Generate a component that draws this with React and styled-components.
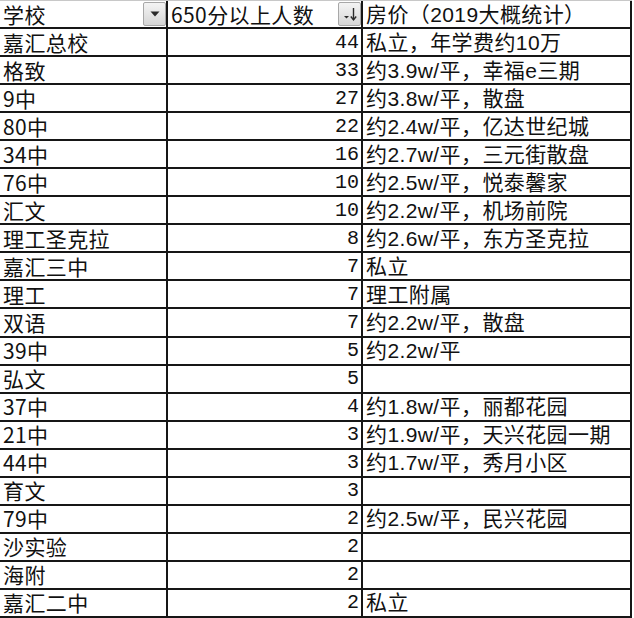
import React from 'react';
import styled, { createGlobalStyle } from 'styled-components';

const Global = createGlobalStyle`
  html, body {
    margin: 0;
    padding: 0;
    background: #ffffff;
  }
`;

const Sheet = styled.div`
  width: 632px;
  height: 618px;
  display: grid;
  grid-template-columns: 168px 195px 1fr;
  grid-template-rows: repeat(22, 1fr);
  border-top: 1px solid #c8c8c8;
  box-sizing: border-box;
  background: #fff;
`;

const Cell = styled.div`
  box-sizing: border-box;
  min-height: 0;
  display: flex;
  align-items: center;
  justify-content: ${p => (p.$right ? 'flex-end' : 'flex-start')};
  gap: 4px;
  padding: 0 ${p => (p.$right ? '2px' : '0')} 0 ${p => (p.$right ? '0' : '3px')};
  border-right: 2px solid #161616;
  border-bottom: 2px solid #161616;
  font-family: ${p =>
    p.$kind === 'num'
      ? '"Liberation Mono", "Noto Sans CJK SC", monospace'
      : p.$kind === 'note'
      ? '"Liberation Sans", "Noto Sans CJK SC", sans-serif'
      : '"Noto Sans CJK SC", sans-serif'};
  font-size: ${p => (p.$kind === 'num' ? '20px' : '21px')};
  letter-spacing: ${p => (p.$kind === 'num' ? '0' : '0.4px')};
  line-height: 25px;
  color: #111;
  white-space: nowrap;
`;

const Label = styled.span`
  flex: 1;
  min-width: 0;
`;

const FilterButton = styled.div`
  flex: none;
  width: 23px;
  height: 24px;
  box-sizing: border-box;
  border: 1px solid #a8a8a8;
  border-radius: 2px;
  background: linear-gradient(#f4f4f4, #d6d6d6);
  display: flex;
  align-items: center;
  justify-content: center;
`;

function DropIcon() {
  return (
    <svg width="10" height="6" viewBox="0 0 10 6">
      <path d="M0.5 0.5 L9.5 0.5 L5 5.5 Z" fill="#2a2a2a" />
    </svg>
  );
}

function SortIcon() {
  return (
    <svg width="16" height="16" viewBox="0 0 16 16">
      <path d="M2 10 L7 10 L4.5 12.5 Z" fill="#2a2a2a" />
      <path d="M11.5 2 L11.5 13.5" stroke="#2a2a2a" strokeWidth="1.4" />
      <path d="M8.8 10.5 L11.5 13.8 L14.2 10.5" stroke="#2a2a2a" strokeWidth="1.4" fill="none" />
    </svg>
  );
}

const rows = [
  ['嘉汇总校', 44, '私立，年学费约10万'],
  ['格致', 33, '约3.9w/平，幸福e三期'],
  ['9中', 27, '约3.8w/平，散盘'],
  ['80中', 22, '约2.4w/平，亿达世纪城'],
  ['34中', 16, '约2.7w/平，三元街散盘'],
  ['76中', 10, '约2.5w/平，悦泰馨家'],
  ['汇文', 10, '约2.2w/平，机场前院'],
  ['理工圣克拉', 8, '约2.6w/平，东方圣克拉'],
  ['嘉汇三中', 7, '私立'],
  ['理工', 7, '理工附属'],
  ['双语', 7, '约2.2w/平，散盘'],
  ['39中', 5, '约2.2w/平'],
  ['弘文', 5, ''],
  ['37中', 4, '约1.8w/平，丽都花园'],
  ['21中', 3, '约1.9w/平，天兴花园一期'],
  ['44中', 3, '约1.7w/平，秀月小区'],
  ['育文', 3, ''],
  ['79中', 2, '约2.5w/平，民兴花园'],
  ['沙实验', 2, ''],
  ['海附', 2, ''],
  ['嘉汇二中', 2, '私立'],
];

export default function App() {
  return (
    <>
      <Global />
      <Sheet>
        <Cell>
          <Label>学校</Label>
          <FilterButton><DropIcon /></FilterButton>
        </Cell>
        <Cell>
          <Label>650分以上人数</Label>
          <FilterButton><SortIcon /></FilterButton>
        </Cell>
        <Cell $kind="note">房价（2019大概统计）</Cell>
        {rows.map(([school, count, note]) => (
          <React.Fragment key={school}>
            <Cell>{school}</Cell>
            <Cell $right $kind="num">{count}</Cell>
            <Cell $kind="note">{note}</Cell>
          </React.Fragment>
        ))}
      </Sheet>
    </>
  );
}
